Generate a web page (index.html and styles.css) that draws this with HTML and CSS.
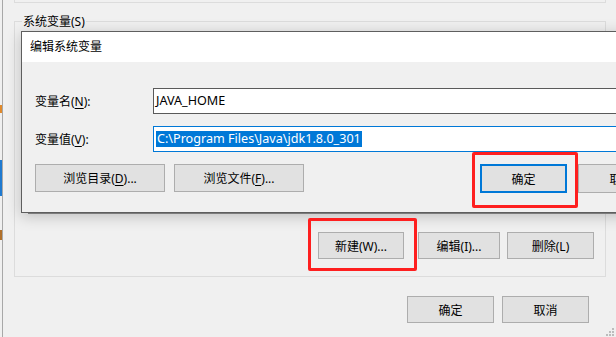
FILE: index.html
```html
<!DOCTYPE html>
<html lang="zh-CN">
<head>
    <meta charset="UTF-8">
    <meta name="viewport" content="width=device-width, initial-scale=1.0">
    <title>编辑系统变量</title>
    <link rel="stylesheet" href="styles.css">
</head>
<body>
    <div class="screen">
        <!-- edge of the window behind -->
        <div class="edge">
            <span class="mark mark-orange"></span>
            <span class="mark mark-blue"></span>
            <span class="mark mark-dark"></span>
        </div>

        <!-- environment variables window -->
        <div class="window">
            <div class="top-panel"></div>

            <fieldset class="group">
                <legend>系统变量(S)</legend>
                <div class="group-buttons">
                    <button class="btn btn-new">新建(W)...</button>
                    <button class="btn btn-edit">编辑(I)...</button>
                    <button class="btn btn-del">删除(L)</button>
                </div>
            </fieldset>

            <div class="footer">
                <button class="btn btn-footer">确定</button>
                <button class="btn btn-footer">取消</button>
            </div>

            <svg class="grip" width="12" height="10" viewBox="0 0 12 10">
                <rect x="9" y="1" width="2" height="2" fill="#bcbcbc"/>
                <rect x="6" y="4" width="2" height="2" fill="#bcbcbc"/>
                <rect x="9" y="4" width="2" height="2" fill="#bcbcbc"/>
                <rect x="3" y="7" width="2" height="2" fill="#bcbcbc"/>
                <rect x="6" y="7" width="2" height="2" fill="#bcbcbc"/>
                <rect x="9" y="7" width="2" height="2" fill="#bcbcbc"/>
            </svg>
        </div>

        <!-- edit dialog on top -->
        <div class="dialog">
            <div class="dialog-title">编辑系统变量</div>
            <div class="dialog-body">
                <div class="field-row">
                    <label class="field-label">变量名(<u>N</u>):</label>
                    <div class="field-input">JAVA_HOME</div>
                </div>
                <div class="field-row">
                    <label class="field-label">变量值(<u>V</u>):</label>
                    <div class="field-input focused"><span class="selected">C:\Program Files\Java\jdk1.8.0_301</span></div>
                </div>
                <div class="dialog-buttons">
                    <button class="btn btn-browse">浏览目录(<u>D</u>)...</button>
                    <button class="btn btn-browse">浏览文件(<u>F</u>)...</button>
                    <span class="spacer"></span>
                    <button class="btn btn-ok">确定</button>
                    <button class="btn btn-cancel">取消</button>
                </div>
            </div>
        </div>

        <!-- red annotation boxes -->
        <div class="highlight highlight-ok"></div>
        <div class="highlight highlight-new"></div>
    </div>
</body>
</html>
```

FILE: styles.css
```css
* {
    box-sizing: border-box;
}

body {
    margin: 0;
    background-color: #f0f0f0;
    font-family: "Noto Sans", "Noto Sans CJK SC", sans-serif;
    font-size: 12px;
    color: #000;
}

.screen {
    position: relative;
    display: flex;
    width: 616px;
    height: 337px;
    overflow: hidden;
}

/* Left edge of another window */
.edge {
    display: flex;
    flex-direction: column;
    width: 3px;
    border-right: 1px solid #a8a8a8;
}

.mark {
    display: block;
    width: 2px;
}

.mark-orange {
    height: 8px;
    margin-top: 105px;
    background-color: #e08a2c;
}

.mark-blue {
    height: 36px;
    margin-top: 47px;
    background-color: #1f7ad0;
}

.mark-dark {
    height: 10px;
    margin-top: 34px;
    background-color: #b0702a;
}

/* Main window */
.window {
    position: relative;
    flex: 1;
    padding-left: 11px;
}

.top-panel {
    width: 592px;
    height: 3px;
    border: 1px solid #dcdcdc;
    border-top: none;
}

.group {
    width: 592px;
    height: 264px;
    margin: 10px 0 0 0;
    padding: 0 11px 0 7px;
    border: 1px solid #dcdcdc;
}

.group legend {
    padding: 2px 1px 0;
    line-height: 14px;
    color: #000;
}

.group-buttons {
    display: flex;
    justify-content: flex-end;
    margin-top: 203px;
}

.btn {
    flex-shrink: 0;
    height: 27px;
    padding: 0;
    border: 1px solid #adadad;
    background-color: #e1e1e1;
    font-family: inherit;
    font-size: 12px;
    color: #000;
}

.btn u {
    text-decoration-thickness: 1px;
    text-underline-offset: 2px;
}

.btn-new {
    width: 86px;
}

.btn-edit {
    width: 82px;
    margin-left: 14px;
}

.btn-del {
    width: 87px;
    margin-left: 7px;
}

.footer {
    display: flex;
    justify-content: flex-end;
    gap: 8px;
    margin-top: 19px;
    padding-right: 27px;
}

.btn-footer {
    width: 87px;
}

.grip {
    position: absolute;
    right: 1px;
    bottom: 0;
}

/* Edit dialog */
.dialog {
    position: absolute;
    left: 21px;
    top: 31px;
    width: 640px;
    height: 182px;
    background-color: #f0f0f0;
    border: 1px solid #5e5e5e;
    box-shadow: 6px 2px 0 -1px #7c7c7c, 0 3px 14px rgba(0, 0, 0, 0.22);
}

.dialog-title {
    height: 30px;
    padding-left: 8px;
    line-height: 30px;
    background-color: #fff;
}

.dialog-body {
    padding: 26px 0 0 13px;
}

.field-row {
    display: flex;
    align-items: center;
    height: 26px;
    margin-bottom: 12px;
}

.field-label {
    flex-shrink: 0;
    width: 118px;
}

.field-label u {
    text-underline-offset: 2px;
}

.field-input {
    flex: 1;
    height: 26px;
    padding-left: 2px;
    font-size: 12.6px;
    line-height: 24px;
    background-color: #fff;
    border: 1px solid #5a5a5a;
}

.field-input.focused {
    border-color: #0078d7;
}

.selected {
    display: inline-block;
    height: 16px;
    padding: 0 1px;
    line-height: 16px;
    background-color: #0078d7;
    color: #fff;
}

.dialog-buttons {
    display: flex;
    margin-top: 5px;
}

.btn-browse {
    width: 130px;
    height: 28px;
    margin-right: 9px;
}

.spacer {
    flex-shrink: 0;
    width: 167px;
}

.btn-ok {
    width: 87px;
    height: 29px;
    border: 2px solid #0078d7;
}

.btn-cancel {
    width: 87px;
    height: 29px;
    margin-left: 11px;
}

/* Red marks drawn over the screenshot */
.highlight {
    position: absolute;
    border: 3px solid #fe1f1f;
    border-radius: 2px;
}

.highlight-ok {
    left: 472px;
    top: 152px;
    width: 106px;
    height: 56px;
}

.highlight-new {
    left: 308px;
    top: 218px;
    width: 109px;
    height: 53px;
}
```
